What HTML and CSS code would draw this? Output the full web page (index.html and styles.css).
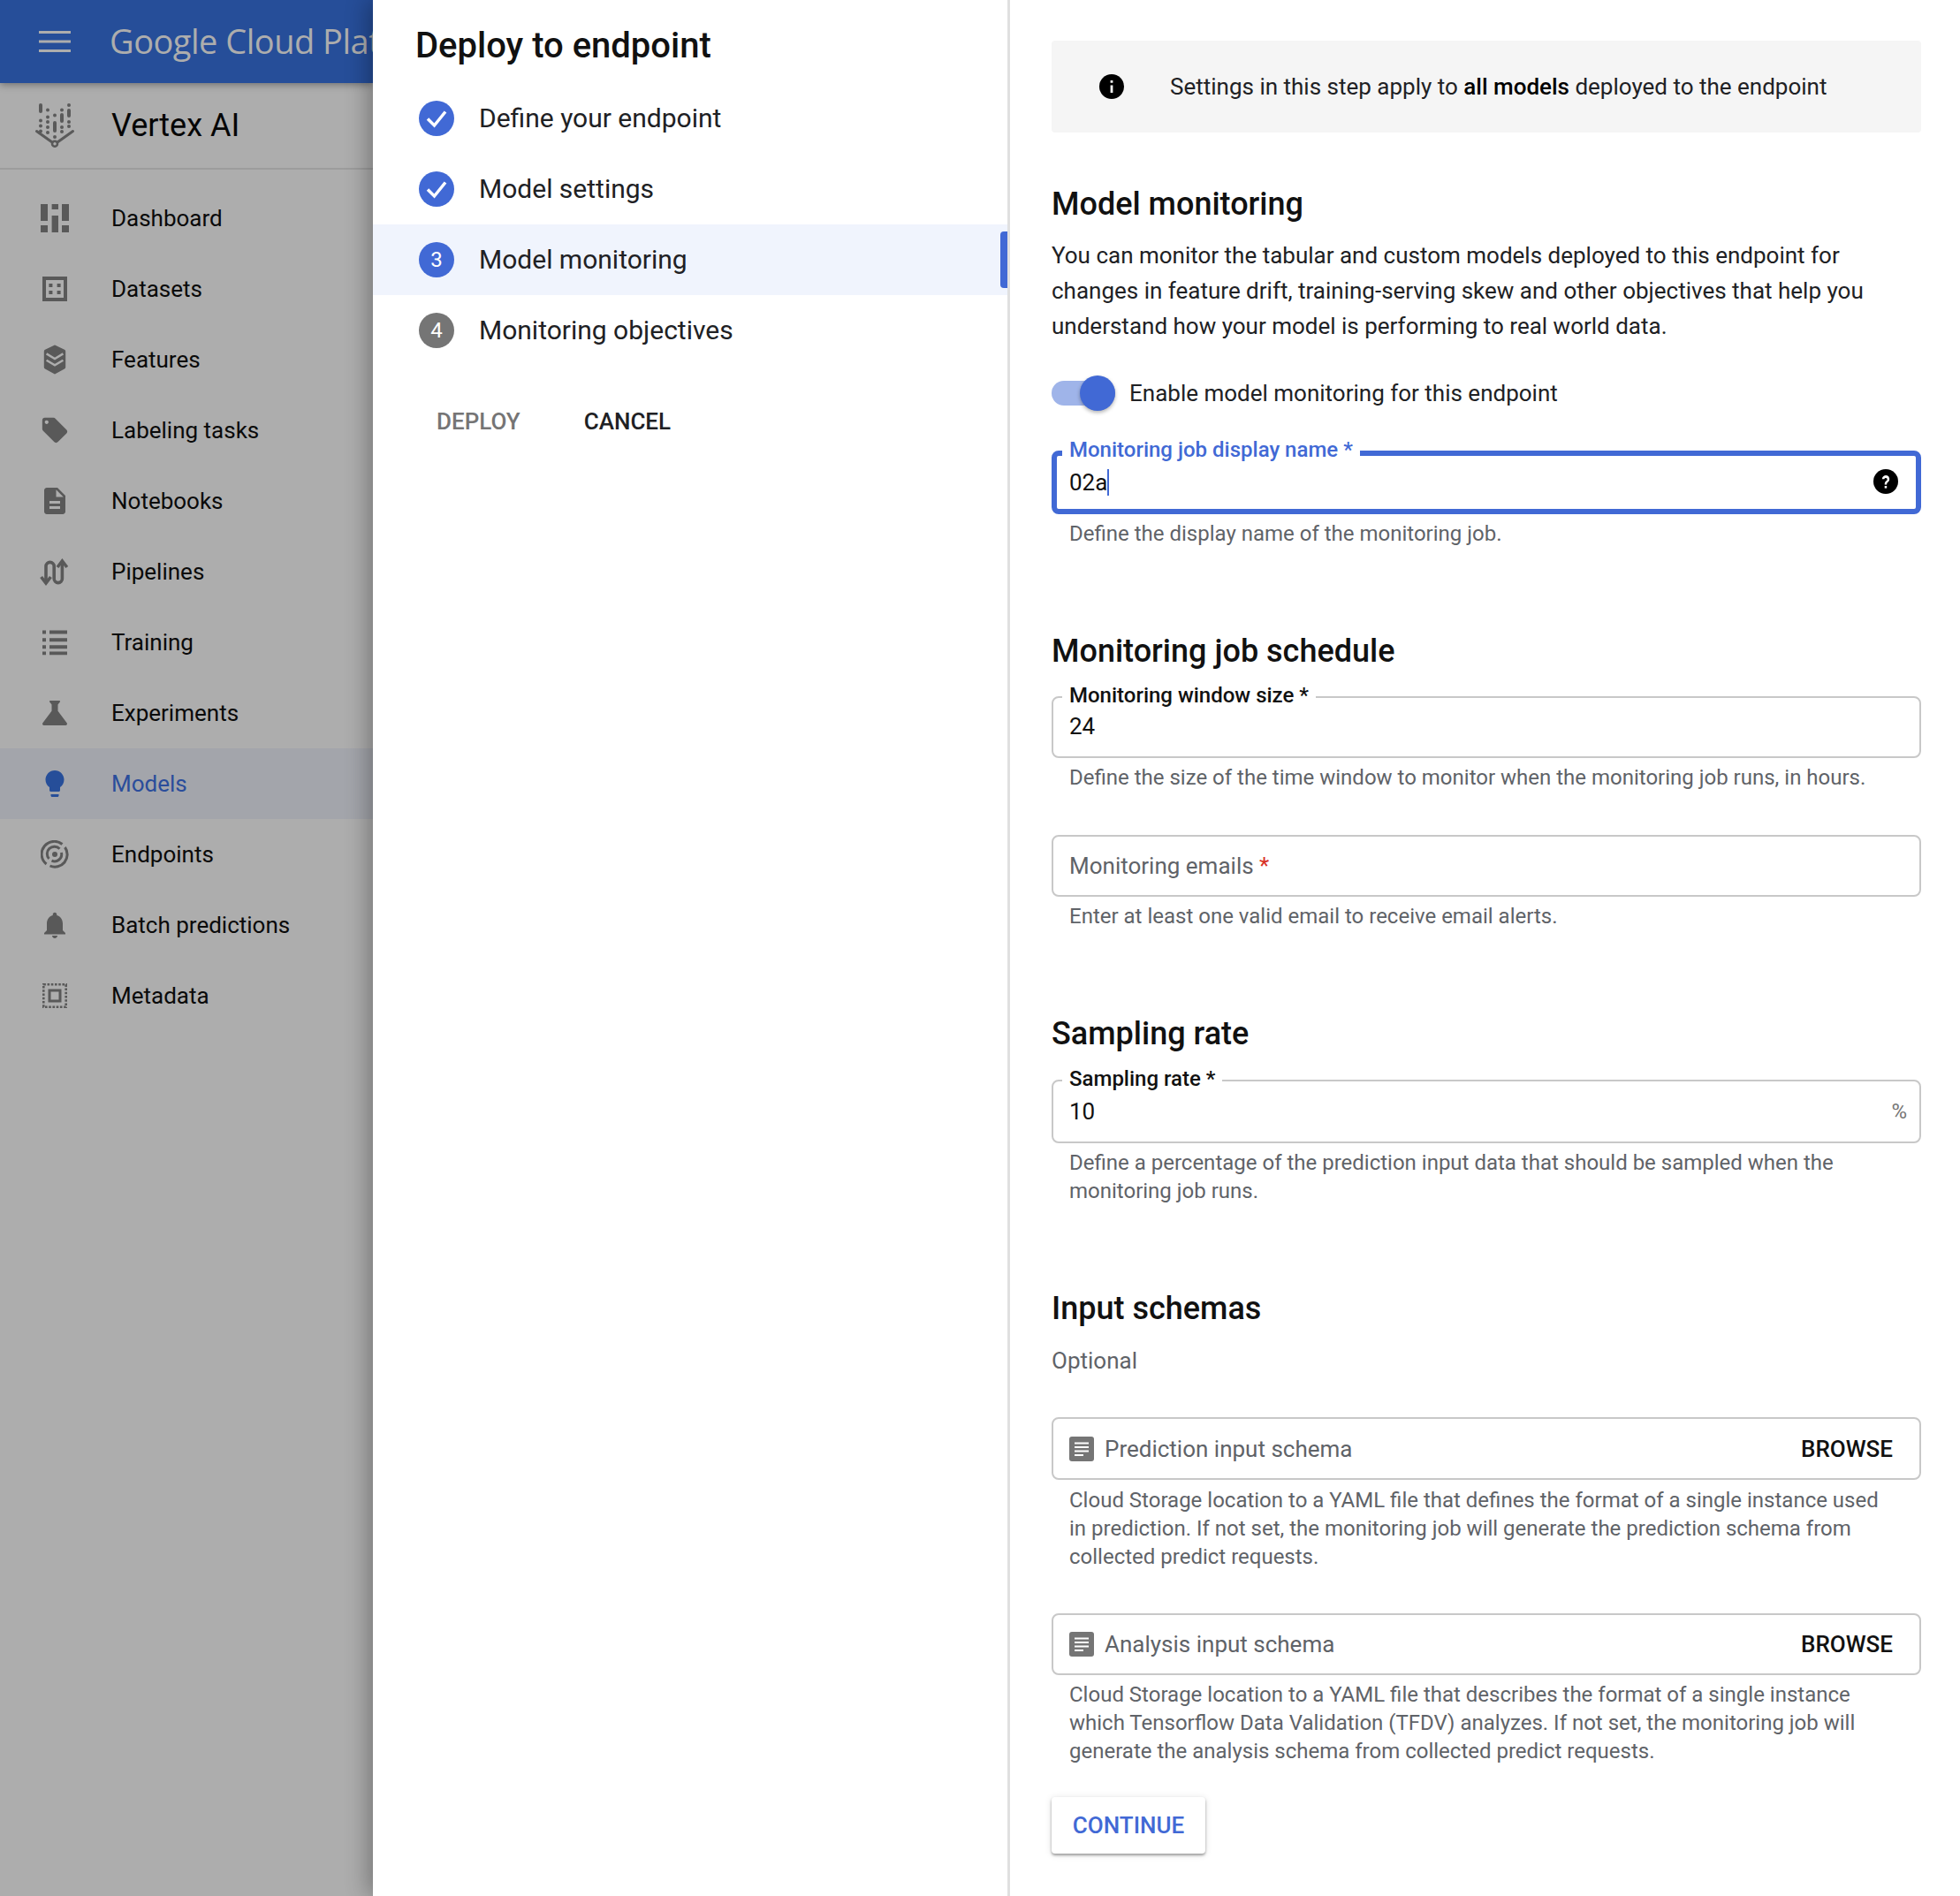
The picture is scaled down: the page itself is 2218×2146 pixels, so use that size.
FILE: index.html
```html
<!DOCTYPE html>
<html lang="en">
<head>
<meta charset="utf-8">
<title>Deploy to endpoint</title>
<link rel="stylesheet" href="styles.css">
</head>
<body>
<div class="app">
  <aside class="sidebar">
    <header class="topbar">
      <svg class="menu-icon" viewBox="0 0 36 24" width="36" height="24"><path d="M0 1.5h36M0 12h36M0 22.500h36" stroke="currentColor" stroke-width="3"/></svg>
      <span class="brand">Google Cloud Plat</span>
    </header>
    <div class="product">
      <span class="nav-icon">
        <svg viewBox="0 0 44 50" width="44" height="50" fill="#5a5a5a"><rect x="4" y="0" width="4" height="11" rx="2"/><circle cx="6" cy="19.500" r="2"/><circle cx="6" cy="25.500" r="2"/><circle cx="6" cy="31.500" r="2"/><circle cx="14" cy="7.500" r="2"/><circle cx="14" cy="15.500" r="2"/><circle cx="14" cy="21" r="2"/><circle cx="14" cy="27" r="2"/><circle cx="14" cy="33" r="2"/><circle cx="22" cy="13.500" r="2"/><rect x="20" y="20" width="4" height="13" rx="2"/><circle cx="22" cy="38" r="2"/><circle cx="30" cy="7.500" r="2"/><rect x="28" y="11" width="4" height="11" rx="2"/><circle cx="30" cy="27" r="2"/><circle cx="30" cy="32" r="2"/><circle cx="38" cy="2" r="2"/><rect x="36" y="6" width="4" height="10" rx="2"/><circle cx="38" cy="21" r="2"/><circle cx="38" cy="26" r="2"/><path d="M1.500 31.500L19 44M42.500 31.500L25 44" stroke="#5a5a5a" stroke-width="3" stroke-linecap="round" fill="none"/><circle cx="22" cy="45.800" r="3" fill="none" stroke="#5a5a5a" stroke-width="2.500"/></svg>
      </span>
      <span class="product-name">Vertex AI</span>
    </div>
    <nav class="nav">
      <a class="nav-item"><span class="nav-icon"><svg viewBox="0 0 24 24" width="48" height="48"><path d="M4 4h4v9.500H4zM4 16h4v4H4zM10.300 4H14v3h-3.700zM10.300 10.500H14V20h-3.700zM16 4h4v9.500h-4zM16 16h4v4h-4z"/></svg></span><span>Dashboard</span></a>
      <a class="nav-item"><span class="nav-icon"><svg viewBox="0 0 24 24" width="48" height="48"><path fill-rule="evenodd" d="M5 5h14v14H5zM7 7v10h10V7z"/><path d="M8.700 9h2v2h-2zM13.300 9h2v2h-2zM8.700 13h2v2h-2zM13.300 13h2v2h-2z"/></svg></span><span>Datasets</span></a>
      <a class="nav-item"><span class="nav-icon"><svg viewBox="0 0 24 24" width="48" height="48"><path d="M12 3.800l5.500 2.600q.6.300.6 1v8.800q0 .7-.6 1L12 20.200l-5.500-2.990q-.6-.3-.6-1V7.400q0-.7.6-1z"/><path d="M7.300 8.700l4.700 2.800 4.700-2.800M7.300 12.400l4.700 2.800 4.700-2.800" fill="none" stroke="#adadad" stroke-width="1.200"/></svg></span><span>Features</span></a>
      <a class="nav-item"><span class="nav-icon"><svg viewBox="0 0 24 24" width="34" height="34"><path d="M21.410 11.580l-9-9C12.050 2.220 11.550 2 11 2H4c-1.100 0-2 .9-2 2v7c0 .55.22 1.050.59 1.420l9 9c.36.36.86.58 1.410.58.55 0 1.050-.22 1.410-.59l7-7c.37-.36.59-.86.59-1.410 0-.55-.23-1.060-.59-1.420zM5.500 7C4.670 7 4 6.330 4 5.500S4.670 4 5.500 4 7 4.670 7 5.500 6.330 7 5.500 7z"/></svg></span><span>Labeling tasks</span></a>
      <a class="nav-item"><span class="nav-icon"><svg viewBox="0 0 24 24" width="36" height="36"><path d="M14 2H6c-1.100 0-1.990.9-1.990 2L4 20c0 1.100.89 2 1.990 2H18c1.100 0 2-.9 2-2V8l-6-6zm2 16H8v-2h8v2zm0-4H8v-2h8v2zm-3-5V3.500L18.500 9H13z"/></svg></span><span>Notebooks</span></a>
      <a class="nav-item"><span class="nav-icon"><svg viewBox="0 0 24 24" width="48" height="48"><path d="M7 17.500V9a2.300 2.300 0 0 1 4.600 0v7a2.300 2.300 0 0 0 4.600 0V7" fill="none" stroke="#595959" stroke-width="1.800"/><path d="M4.300 15L7 18.500 9.700 15M13.500 9.500L16.200 6l2.700 3.500" fill="none" stroke="#595959" stroke-width="1.800"/></svg></span><span>Pipelines</span></a>
      <a class="nav-item"><span class="nav-icon"><svg viewBox="0 0 24 24" width="48" height="48"><path d="M5 5.300h2v2H5zM9 5.300h10v2H9zM5 9.600h2v2H5zM9 9.600h10v2H9zM5 13.600h2v2H5zM9 13.600h10v2H9zM5 17.300h2v1.800H5zM9 17.300h10v1.800H9z"/></svg></span><span>Training</span></a>
      <a class="nav-item"><span class="nav-icon"><svg viewBox="0 0 24 24" width="42" height="42"><path d="M19.800 18.400L14 10.670V6.500l1.350-1.690c.26-.33.03-.81-.39-.81H9.040c-.42 0-.65.48-.39.81L10 6.500v4.170L4.200 18.400c-.49.66-.02 1.600.8 1.600h14c.82 0 1.290-.94.8-1.600z"/></svg></span><span>Experiments</span></a>
      <a class="nav-item is-active"><span class="nav-icon"><svg viewBox="0 0 24 24" width="36" height="36"><path d="M9 21c0 .55.45 1 1 1h4c.55 0 1-.45 1-1v-1H9v1zm3-19C8.140 2 5 5.140 5 9c0 2.380 1.190 4.470 3 5.740V17c0 .55.45 1 1 1h6c.55 0 1-.45 1-1v-2.260c1.810-1.270 3-3.360 3-5.740 0-3.860-3.140-7-7-7z"/></svg></span><span>Models</span></a>
      <a class="nav-item"><span class="nav-icon"><svg viewBox="0 0 32 32" width="32" height="32" fill="none" stroke="#595959" stroke-width="3"><path d="M6.500 27A14 14 0 0 1 24.500 4.500M27.500 8A14 14 0 0 1 10.500 29"/><path d="M9.500 21A8 8 0 0 1 21.500 9.800M23.500 14A8 8 0 0 1 12.500 23.200"/><circle cx="16" cy="16" r="3" fill="#595959" stroke="none"/></svg></span><span>Endpoints</span></a>
      <a class="nav-item"><span class="nav-icon"><svg viewBox="0 0 24 24" width="36" height="36"><path d="M12 22c1.100 0 2-.9 2-2h-4c0 1.100.89 2 2 2zm6-6v-5c0-3.070-1.640-5.640-4.500-6.320V4c0-.83-.67-1.500-1.500-1.500s-1.500.67-1.500 1.500v.68C7.630 5.360 6 7.920 6 11v5l-2 2v1h16v-1l-2-2z"/></svg></span><span>Batch predictions</span></a>
      <a class="nav-item"><span class="nav-icon"><svg viewBox="0 0 28 28" width="28" height="28"><path d="M6.500 6.500h15v15h-15zM9.500 9.500v9h9v-9z" fill-rule="evenodd"/><rect x="1.300" y="1.300" width="25.400" height="25.400" fill="none" stroke="#595959" stroke-width="2.600" stroke-dasharray="2.600 1.630"/></svg></span><span>Metadata</span></a>
    </nav>
  </aside>

  <section class="dialog">
    <div class="stepper">
      <h1 class="dialog-title">Deploy to endpoint</h1>
      <ol class="steps">
        <li class="step"><span class="step-badge"><svg viewBox="0 0 40 40" width="40" height="40"><path d="M10 20.500l7.500 7.500L30 12.500" fill="none" stroke="#fff" stroke-width="3.500"/></svg></span><span class="step-label">Define your endpoint</span></li>
        <li class="step"><span class="step-badge"><svg viewBox="0 0 40 40" width="40" height="40"><path d="M10 20.500l7.500 7.500L30 12.500" fill="none" stroke="#fff" stroke-width="3.500"/></svg></span><span class="step-label">Model settings</span></li>
        <li class="step is-current"><span class="step-badge">3</span><span class="step-label">Model monitoring</span></li>
        <li class="step is-todo"><span class="step-badge">4</span><span class="step-label">Monitoring objectives</span></li>
      </ol>
      <div class="step-actions">
        <span class="action-muted">DEPLOY</span>
        <span class="action-strong">CANCEL</span>
      </div>
    </div>

    <main class="form">
      <div class="info-box">
        <svg viewBox="0 0 28 28" width="28" height="28"><circle cx="14" cy="14" r="14"/><path d="M12.600 12.500h2.800V21h-2.800zM12.600 7h2.800v2.800h-2.800z" fill="#f5f5f5"/></svg>
        <p>Settings in this step apply to <b>all models</b> deployed to the endpoint</p>
      </div>

      <h2 class="heading h-first">Model monitoring</h2>
      <p class="lead">You can monitor the tabular and custom models deployed to this endpoint for changes in feature drift, training-serving skew and other objectives that help you understand how your model is performing to real world data.</p>
      <div class="toggle-row">
        <span class="toggle"><span class="toggle-thumb"></span></span>
        <span>Enable model monitoring for this endpoint</span>
      </div>

      <div class="field is-focused">
        <label class="field-label">Monitoring job display name *</label>
        <span class="field-value">02a<span class="caret"></span></span>
        <svg class="help" viewBox="0 0 28 28" width="28" height="28"><circle cx="14" cy="14" r="14"/><path d="M9.800 11.200a4.200 4.200 0 1 1 6.900 3.200c-1.300 1.100-1.500 1.500-1.500 3h-2.500c0-2.300.6-3 1.900-4.200a1.700 1.700 0 1 0-2.300-2z" fill="#fff"/><rect x="12.700" y="19" width="2.500" height="2.600" fill="#fff"/></svg>
      </div>
      <p class="hint">Define the display name of the monitoring job.</p>

      <h2 class="heading h-next">Monitoring job schedule</h2>
      <div class="field f-window">
        <label class="field-label">Monitoring window size *</label>
        <span class="field-value">24</span>
      </div>
      <p class="hint">Define the size of the time window to monitor when the monitoring job runs, in hours.</p>

      <div class="field f-after-hint">
        <span class="field-placeholder">Monitoring emails <em>*</em></span>
      </div>
      <p class="hint">Enter at least one valid email to receive email alerts.</p>

      <h2 class="heading h-next">Sampling rate</h2>
      <div class="field f-sampling">
        <label class="field-label">Sampling rate *</label>
        <span class="field-value">10</span>
        <span class="suffix">%</span>
      </div>
      <p class="hint">Define a percentage of the prediction input data that should be sampled when the monitoring job runs.</p>

      <h2 class="heading h-next">Input schemas</h2>
      <p class="optional">Optional</p>

      <div class="field f-file f-first-file">
        <svg viewBox="0 0 28 28" width="28" height="28"><rect width="28" height="28" rx="3" fill="#757575"/><path d="M6 7.500h16M6 12h16M6 16.500h16M6 21h10" stroke="#fff" stroke-width="2"/></svg>
        <span class="field-placeholder">Prediction input schema</span>
        <span class="browse">BROWSE</span>
      </div>
      <p class="hint hint-narrow hint-first">Cloud Storage location to a YAML file that defines the format of a single instance used in prediction. If not set, the monitoring job will generate the prediction schema from collected predict requests.</p>

      <div class="field f-file f-second-file">
        <svg viewBox="0 0 28 28" width="28" height="28"><rect width="28" height="28" rx="3" fill="#757575"/><path d="M6 7.500h16M6 12h16M6 16.500h16M6 21h10" stroke="#fff" stroke-width="2"/></svg>
        <span class="field-placeholder">Analysis input schema</span>
        <span class="browse">BROWSE</span>
      </div>
      <p class="hint hint-narrow">Cloud Storage location to a YAML file that describes the format of a single instance which Tensorflow Data Validation (TFDV) analyzes. If not set, the monitoring job will generate the analysis schema from collected predict requests.</p>

      <button class="continue">CONTINUE</button>
    </main>
  </section>
</div>
</body>
</html>
```

FILE: styles.css
```css
* { box-sizing: border-box; }
html, body { margin: 0; padding: 0; }
body {
  width: 2218px;
  height: 2146px;
  overflow: hidden;
  background: #fff;
  color: #111;
  font-family: Roboto, "Liberation Sans", sans-serif;
}
h1, h2, p, ol { margin: 0; padding: 0; }
ol { list-style: none; }

.app { display: flex; height: 2146px; }

/* dimmed side navigation */
.sidebar {
  width: 422px;
  flex: none;
  background: #adadad;
  overflow: hidden;
}
.topbar {
  display: flex;
  align-items: center;
  height: 94px;
  background: #264e99;
  color: #adadad;
  white-space: nowrap;
  padding-left: 44px;
  box-shadow: 0 2px 8px rgba(0, 0, 0, .35);
  position: relative;
}
.menu-icon { flex: none; margin-right: 44px; }
.brand {
  font-family: "Open Sans", Roboto, sans-serif;
  font-size: 38px;
  letter-spacing: -.5px;
  padding-bottom: 3px;
}
.product {
  display: flex;
  align-items: center;
  height: 98px;
  border-bottom: 2px solid #9c9c9c;
  font-size: 36px;
  color: #060606;
}
.nav-icon {
  flex: none;
  display: flex;
  align-items: center;
  justify-content: center;
  width: 124px;
  fill: #595959;
}
.nav { padding-top: 15px; }
.nav-item {
  display: flex;
  align-items: center;
  height: 80px;
  font-size: 26px;
  color: #0a0a0a;
}
.nav-item.is-active {
  background: #a3a5ab;
  color: #2a4d9b;
}
.is-active .nav-icon { fill: #264e99; }
.nav-item > span:last-child { margin-left: 2px; }
.product-name { margin-left: 2px; }

/* dialog */
.dialog {
  flex: 1;
  display: flex;
  background: #fff;
  box-shadow: -6px 0 24px rgba(0, 0, 0, .3);
  position: relative;
}
.stepper {
  width: 721px;
  flex: none;
  border-right: 3px solid #e0e0e0;
  padding-top: 27px;
}
.dialog-title {
  font-size: 40px;
  font-weight: 500;
  line-height: 50px;
  padding-left: 48px;
  color: #111;
}
.steps { margin-top: 17px; }
.step {
  display: flex;
  align-items: center;
  height: 80px;
  padding-left: 52px;
  font-size: 30px;
  color: #202124;
  position: relative;
}
.step-label { margin-top: -2px; }
.step-badge {
  flex: none;
  width: 40px;
  height: 40px;
  margin-right: 28px;
  border-radius: 50%;
  background: #4169d5;
  color: #fff;
  font-size: 24px;
  display: flex;
  align-items: center;
  justify-content: center;
}
.step.is-current { background: #f0f4fd; }
.step.is-current::after {
  content: "";
  position: absolute;
  right: 0;
  top: 8px;
  width: 8px;
  height: 64px;
  border-radius: 4px 0 0 4px;
  background: #4169d5;
}
.step.is-todo .step-badge { background: #757575; }
.step-actions {
  display: flex;
  gap: 72px;
  margin-top: 43px;
  padding-left: 72px;
  font-size: 26px;
  font-weight: 500;
  line-height: 40px;
}
.action-muted { color: #757575; }
.action-strong { color: #202124; }

/* form column */
.form {
  flex: 1;
  padding: 46px 44px 0 47px;
  min-width: 0;
}
.info-box {
  display: flex;
  align-items: center;
  height: 104px;
  padding-left: 54px;
  gap: 52px;
  background: #f5f5f5;
  border-radius: 4px;
  font-size: 26px;
  color: #202124;
}
.info-box b { font-weight: 500; color: #000; }
.heading {
  font-size: 36px;
  font-weight: 500;
  line-height: 44px;
  color: #111;
}
.h-first { margin-top: 59px; }
.h-next { margin-top: 95px; }
.lead {
  margin-top: 16px;
  font-size: 26px;
  line-height: 40px;
  color: #202124;
}
.toggle-row {
  display: flex;
  align-items: center;
  gap: 16px;
  height: 40px;
  margin-top: 36px;
  font-size: 26px;
  color: #202124;
}
.toggle {
  display: block;
  width: 72px;
  height: 28px;
  border-radius: 14px;
  background: #9fb4e9;
  position: relative;
}
.toggle-thumb {
  position: absolute;
  right: 0;
  top: -6px;
  width: 40px;
  height: 40px;
  border-radius: 50%;
  background: #4169d5;
  box-shadow: 0 2px 4px rgba(0, 0, 0, .3);
}
.field {
  position: relative;
  display: flex;
  align-items: center;
  height: 70px;
  padding: 0 18px;
  border: 2px solid #c8c8c8;
  border-radius: 8px;
  font-size: 26px;
}
.field.is-focused {
  height: 72px;
  margin-top: 45px;
  padding: 0 14px;
  border: 6px solid #4169d5;
}
.f-window { margin-top: 29px; }
.f-sampling { margin-top: 30px; height: 72px; }
.f-after-hint { margin-top: 49px; }
.f-first-file { margin-top: 44px; height: 71px; }
.f-second-file { margin-top: 48px; }
.field-label {
  position: absolute;
  left: 10px;
  top: -19px;
  padding: 0 8px;
  background: #fff;
  font-size: 24px;
  font-weight: 500;
  line-height: 32px;
  color: #111;
}
.is-focused .field-label {
  left: 6px;
  top: -23px;
  color: #4169d5;
}
.field-value { color: #111; font-size: 26px; }
.f-window .field-value { margin-top: -2px; }
.caret {
  display: inline-block;
  width: 2px;
  height: 30px;
  background: #4169d5;
  vertical-align: -6px;
}
.help { margin: -2px 6px 0 auto; }
.suffix { margin-left: auto; color: #757575; font-size: 24px; margin-right: -4px; }
.field-placeholder { color: #5f6368; font-size: 26px; }
.field-placeholder em { font-style: normal; color: #d93025; }
.f-file { gap: 12px; }
.browse {
  margin-left: auto;
  margin-right: 12px;
  font-size: 26px;
  font-weight: 500;
  color: #111;
}
.hint {
  margin-top: 6px;
  padding-left: 20px;
  font-size: 24px;
  line-height: 32px;
  color: #5f6368;
}
.hint-first { margin-top: 7px; }
.hint-narrow { padding-right: 34px; }
.optional {
  margin-top: 17px;
  font-size: 26px;
  line-height: 40px;
  color: #5f6368;
}
.continue {
  display: block;
  width: 174px;
  height: 64px;
  margin-top: 36px;
  border: 0;
  border-radius: 4px;
  background: #fff;
  box-shadow: 0 2px 3px rgba(0, 0, 0, .35), 0 1px 8px rgba(0, 0, 0, .12);
  font: 500 26px Roboto, sans-serif;
  color: #4169d5;
}
```
